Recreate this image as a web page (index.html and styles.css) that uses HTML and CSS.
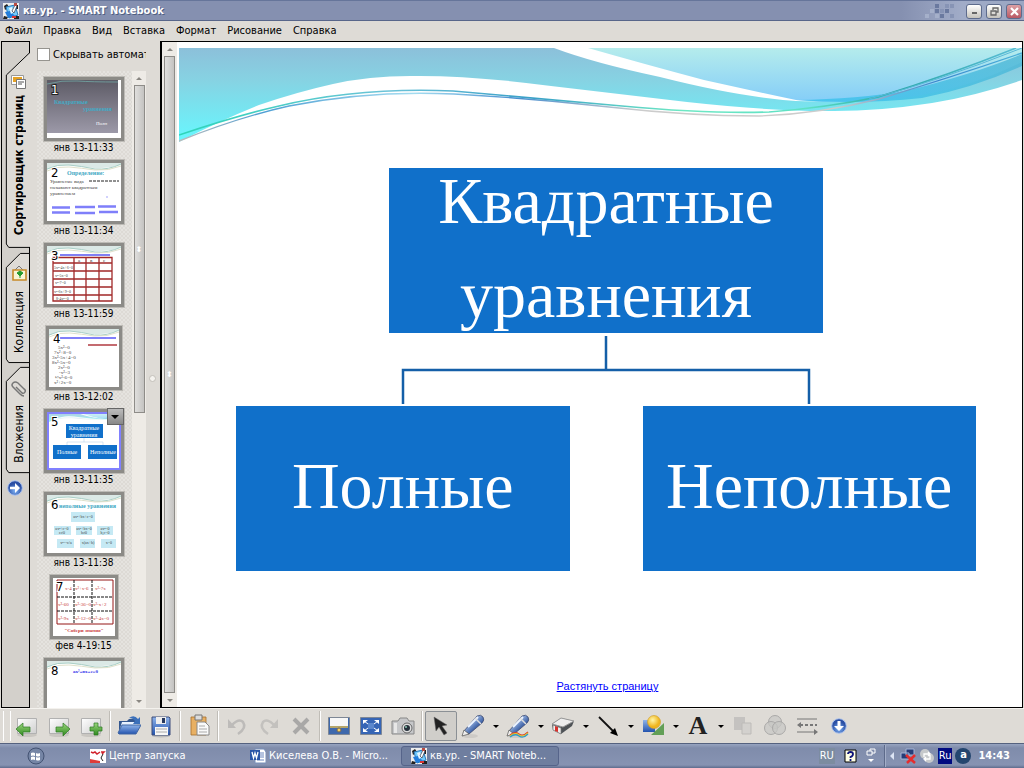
FILE: index.html
```html
<!DOCTYPE html>
<html lang="ru">
<head>
<meta charset="utf-8">
<title>кв.ур. - SMART Notebook</title>
<link rel="stylesheet" href="styles.css">
</head>
<body>
<svg class="defs" aria-hidden="true">
  <defs>
    <linearGradient id="sea" x1="0" y1="0" x2="0" y2="1"><stop offset="0" stop-color="#8cc0da"/><stop offset=".35" stop-color="#86d3e3"/><stop offset="1" stop-color="#66f8ff"/></linearGradient>
    <linearGradient id="sky" x1="0" y1="0" x2="0" y2="1"><stop offset="0" stop-color="#b5ecec"/><stop offset="1" stop-color="#84cdf8"/></linearGradient>
    <linearGradient id="edge" x1="0" y1="1" x2="1" y2="0"><stop offset="0" stop-color="#38c3ee"/><stop offset="1" stop-color="#4fb6d4"/></linearGradient>
    <linearGradient id="line" x1="0" x2="1"><stop offset="0" stop-color="#2ed5b8"/><stop offset=".25" stop-color="#6cc3d8"/><stop offset=".42" stop-color="#3aa0c8"/><stop offset=".6" stop-color="#6ee8c4"/><stop offset=".75" stop-color="#5ee0c4"/><stop offset=".85" stop-color="#2aa9a8"/><stop offset="1" stop-color="#58bcd4"/></linearGradient>
    <linearGradient id="line2" x1="0" x2="1"><stop offset="0" stop-color="#bbb"/><stop offset=".1" stop-color="#4f9fd4"/><stop offset=".28" stop-color="#a4dcf0"/><stop offset=".4" stop-color="#4a8fd0"/><stop offset=".55" stop-color="#ccc"/><stop offset=".78" stop-color="#ccc"/><stop offset=".9" stop-color="#3a86cc"/><stop offset="1" stop-color="#4ab2da"/></linearGradient>
    <linearGradient id="blue" x1="0" y1="0" x2="0" y2="1"><stop offset="0" stop-color="#8fb4ea"/><stop offset="1" stop-color="#2353ae"/></linearGradient>
    <linearGradient id="barrel" x1="0" y1="0" x2="1" y2="1"><stop offset=".3" stop-color="#a9c4ee"/><stop offset=".7" stop-color="#2a4f98"/></linearGradient>
    <linearGradient id="green" x1="0" y1="0" x2="0" y2="1"><stop offset="0" stop-color="#9bd67e"/><stop offset="1" stop-color="#2f8a1e"/></linearGradient>
    <linearGradient id="paper" x1="0" y1="0" x2="1" y2="1"><stop offset="0" stop-color="#fff"/><stop offset="1" stop-color="#cfcfcf"/></linearGradient>
    <linearGradient id="dusk" x1="0" y1="0" x2="0" y2="1"><stop offset="0" stop-color="#5d5b66"/><stop offset="1" stop-color="#9c99a8"/></linearGradient>
    <radialGradient id="sun" cx=".4" cy=".35"><stop offset="0" stop-color="#fff6a8"/><stop offset="1" stop-color="#efb51e"/></radialGradient>
    <radialGradient id="orb" cx=".5" cy=".7"><stop offset="0" stop-color="#7fb2f5"/><stop offset="1" stop-color="#2a4fa4"/></radialGradient>
    <symbol id="wave" viewBox="0 0 843 95" preserveAspectRatio="none">
      <path fill="url(#sea)" d="M0 0H375Q415 15 481 29Q560 49 617 53Q680 55 740 43Q795 29 843 7V32Q800 47 753 55Q695 64 645 63Q590 63 508 54L372 38Q290 27 231 28Q190 28 154 36Q118 44 80 57Q40 73 0 94Z"/>
      <path fill="url(#sky)" d="M409 0H843V14Q795 38 743 47Q680 58 617 52Q570 42 525 32Q465 16 409 0Z"/>
      <path fill="url(#edge)" opacity=".8" d="M617 52Q680 51 726 43Q795 26 843 6V18Q795 40 743 50Q680 57 617 52Z"/>
      <path fill="none" stroke="url(#line2)" stroke-width="1.400" d="M0 93Q60 69 110 58Q190 42 275 46Q350 50 430 59Q510 68 580 68Q640 66 700 51Q770 30 843 5"/>
      <path fill="none" stroke="url(#line)" stroke-width="1.600" d="M0 87Q60 67 100 58Q180 39 274 43Q350 50 443 58Q530 66 590 64Q645 60 699 49Q770 27 837 0"/>
      <path fill="none" stroke="#58b8d8" d="M690 51Q760 33 843 0"/>
    </symbol>
    <symbol id="crest" viewBox="0 0 74 9" preserveAspectRatio="none"><path d="M0 0H74V2Q60 6 47 5T20 2Q8 2 0 7Z" fill="#dbe9e6"/><path d="M0 6Q10 1 22 2T48 6Q62 7 74 1" fill="none" stroke="#a9cfc6"/><path d="M0 8Q10 3 22 4T48 7Q62 8 74 3" fill="none" stroke="#d5d8bd" stroke-width=".8"/></symbol>
    <symbol id="app" viewBox="0 0 16 16"><path fill="#eee" d="M0 0H16V16H0Z"/><path d="M1 3l3-2 2 3-4 3zM12 2h3v4h-2zM1 13l4 1-1 2H0zM11 13h5v3h-5z" fill="#222"/><path d="M3 4l9-2 3 10-9 3z" fill="#73cafa" stroke="#2878ba"/><path d="M2 9l5-1 5 5-7 2z" fill="#237ddb"/><path d="M6 5l3-1 2 5-3 2z" fill="#e4f5ff"/><path d="M9 8l3-6 2 1-3 7z" fill="#fff" stroke="#334" stroke-width=".7"/><path d="M9 13h4v2H9z" fill="#d33"/><path d="M11 0h3v3h-3z" fill="#b94b42"/></symbol>
    <symbol id="page" viewBox="0 0 24 24"><ellipse cx="12" cy="21" rx="10" ry="2" fill="#c9c6c1"/><path fill="url(#paper)" stroke="#b1b1b1" d="M2.500 4.500H21.500V19.500H2.500Z"/></symbol>
    <symbol id="pen" viewBox="0 0 24 24"><ellipse cx="9" cy="22" rx="8" ry="2" fill="#cdcac6"/><path d="M3 17L16 2q4-2 6 1t-1 6L8 20z" fill="url(#barrel)" stroke="#414d70" stroke-width=".8"/><path d="M7 13L17 3" stroke="#eef5ff" stroke-width="2"/><path d="M1 22l2-6 5 4z" fill="#eee" stroke="#555" stroke-width=".7"/><path d="M14 4l6 6" stroke="#ddd" stroke-width="1.500"/></symbol>
    <symbol id="down" viewBox="0 0 16 16"><circle cx="8" cy="8" r="7.300" fill="url(#orb)" stroke="#adc3ed"/><path d="M6.500 3h3v5H13l-5 5-5-5h3.500z" fill="#fff"/></symbol>
    <symbol id="right" viewBox="0 0 16 16"><circle cx="8" cy="8" r="7.300" fill="url(#orb)" stroke="#adc3ed"/><path d="M3 6.800h5V3l5 5-5 5V9.200H3z" fill="#fff"/></symbol>
  </defs>
</svg>

<header class="titlebar">
  <svg class="i16"><use href="#app"/></svg>
  <h1>кв.ур. - SMART Notebook</h1>
  <svg class="pixels" viewBox="0 0 30 16"><path fill="#6a799f" d="M10 1h4v4h-4zM10 6h4v4h-4zM20 6h4v4h-4zM15 11h4v4h-4z"/><path fill="#8794b5" d="M20 1h4v4h-4zM25 1h4v4h-4zM15 6h4v4h-4zM25 11h4v4h-4z"/><path fill="#a5b0ca" d="M0 11h4v4H0zM5 6h4v4H5zM10 11h4v4h-4z"/></svg>
  <button class="win" aria-label="Свернуть"><svg viewBox="0 0 13 13"><path d="M4 7h5v2H4z" fill="#666"/></svg></button>
  <button class="win" aria-label="Восстановить"><svg viewBox="0 0 13 13"><path d="M5 5V3h5v4H8M3 6h5v4H3z" fill="none" stroke="#666" stroke-width="1.300"/></svg></button>
  <button class="win close" aria-label="Закрыть"><svg viewBox="0 0 13 13"><path d="M3 3l7 7M10 3l-7 7" stroke="#fff" stroke-width="2.200"/></svg></button>
</header>
<nav class="menu"><button>Файл</button><button>Правка</button><button>Вид</button><button>Вставка</button><button>Формат</button><button>Рисование</button><button>Справка</button></nav>

<main class="work">
  <div class="tabs">
    <button class="tab sorter"><svg class="shape" viewBox="0 0 29 210"><path fill="#dedbd6" d="M29 8L4 32V207L7 209H29Z"/><path fill="none" stroke="#000" d="M28.500 0V8L4.500 31V206L7 209.500H29"/></svg>
      <svg class="i16" viewBox="0 0 16 16"><path d="M.5 1.500h12v9H.5z" fill="#fff" stroke="#999"/><path d="M2 3h9v5H2z" fill="#e5a225"/><path d="M5.500 5.500h9v9h-9z" fill="#fff" stroke="#777"/><path d="M7 8h6M7 10h4" stroke="#555"/></svg><span>Сортировщик страниц</span></button>
    <button class="tab gallery"><svg class="shape" viewBox="0 0 29 114"><path fill="#dedbd6" stroke="#000" d="M28.500 .5H19L4.500 15V110L7 113.500H28.500Z"/></svg>
      <svg class="i16" viewBox="0 0 16 16"><path d="M4 5l4-4 4 4" fill="none" stroke="#777"/><path d="M2 5h13v10H2z" fill="#f8f4d4" stroke="#c88b28" stroke-width="1.600"/><path d="M9 13V9M6 8l3-2 3 2-3 3z" fill="#269b2d" stroke="#269b2d"/></svg><span>Коллекция</span></button>
    <button class="tab attach"><svg class="shape" viewBox="0 0 29 110"><path fill="#dedbd6" stroke="#000" d="M28.500 .5H19L4.500 15V106L7 109.500H28.500Z"/></svg>
      <svg class="i16" viewBox="0 0 16 16"><path d="M5 6l6 6q2 1 3-1t-1-3L7 2Q4 0 2 2T2 6l7 7q2 2 4 2" fill="none" stroke="#777" stroke-width="1.500"/></svg><span>Вложения</span></button>
    <button class="go" aria-label="Переместить панель"><svg class="i16"><use href="#right"/></svg></button>
  </div>

  <aside class="panel">
    <label class="hide"><input type="checkbox"><span>Скрывать автоматически</span></label>
    <div class="sorterbody">
      <ol class="thumbs">
        <li><div class="frame"><svg viewBox="0 0 74 58"><path fill="url(#dusk)" d="M0 0H71V53H0z"/><path d="M0 4Q15 0 30 1T71 2" fill="none" stroke="#6f9a9a"/><text x="7" y="24" class="t teal b">Квадратные</text><text x="36" y="31" class="t teal b">уравнения</text><text x="49" y="45" class="t s w">Полн</text><text x="4" y="14" class="num inv">1</text></svg></div>янв 13-11:33</li>
        <li><div class="frame"><svg viewBox="0 0 74 58"><use href="#crest" width="74" height="9"/><text x="20" y="12" class="t teal b">Определение:</text><text x="3" y="20" class="t s">Уравнение вида</text><text x="3" y="26" class="t s">называют квадратным</text><text x="3" y="32" class="t s">уравнением</text><path d="M42 18h30" stroke="#222" stroke-dasharray="3 1"/><path d="M5 44.500h18M28 44h20M51 43.500h18M5 49.500h18M28 50h20M52 49h19" stroke="#7f7ffa" stroke-width="2.500"/><circle cx="60" cy="34" r=".7" fill="#7f7ffa"/><text x="4" y="14" class="num">2</text></svg></div>янв 13-11:34</li>
        <li><div class="frame"><svg viewBox="0 0 74 58"><use href="#crest" width="74" height="9"/><path d="M13 9h50" stroke="#8080f4" stroke-width="2"/><path d="M6 11.500H65V55H6zM27 12v43M39 12v43M52 12v43M6 17h59M6 25h59M6 33h59M6 41h59M6 49h59" fill="none" stroke="#a12929" stroke-width="1.300"/><text x="31" y="16" class="t s">a</text><text x="43" y="16" class="t s">в</text><text x="56" y="16" class="t s">c</text><text x="7" y="23" class="t xs">5x²-4x+6=0</text><text x="8" y="31" class="t xs">x²-5x=0</text><text x="8" y="38" class="t xs">x²-7=0</text><text x="7" y="47" class="t xs">x²-6x+9=0</text><text x="9" y="54" class="t xs">8-4x²=0</text><text x="4" y="14" class="num">3</text></svg></div>янв 13-11:59</li>
        <li><div class="frame mid"><svg viewBox="0 0 70 58"><use href="#crest" width="70" height="9"/><path d="M11 9h56" stroke="#8080fa" stroke-width="2"/><path d="M39 16h29" stroke="#c46b70" stroke-width="2"/><text x="9" y="20" class="t s">5x²=0</text><text x="5" y="25" class="t s">7x²+8=0</text><text x="3" y="30" class="t s">3x²-5x+4=0</text><text x="3" y="35" class="t s">8x²-5x=0</text><text x="9" y="40" class="t s">2x²=0</text><text x="10" y="45" class="t s">-x²=3</text><text x="6" y="50" class="t s">½x²-6=0</text><text x="5" y="55" class="t s">x²+2x=0</text><text x="4" y="14" class="num">4</text></svg></div>янв 13-12:02</li>
        <li><div class="frame"><svg viewBox="0 0 74 58"><use href="#wave" x="2" y="2" width="70" height="8" opacity=".7"/><path d="M1 1H73V57H1z" fill="none" stroke="#8080ff" stroke-width="2"/><path d="M19 12h37v14H19zM6 33h28v14H6zM41 33h29v14H41z" fill="#1070ca"/><path d="M37 26v4M20 33v-3h36v3" fill="none" stroke="#b8d1e8" stroke-width=".6"/><text x="37" y="18" class="t w c">Квадратные</text><text x="37" y="25" class="t w c">уравнения</text><text x="20" y="42" class="t w c">Полные</text><text x="56" y="42" class="t w c">Неполные</text><text x="4" y="14" class="num">5</text></svg><button class="drop" aria-label="Меню страницы"><svg viewBox="0 0 10 6"><path d="M1 1h8l-4 4z"/></svg></button></div>янв 13-11:35</li>
        <li><div class="frame"><svg viewBox="0 0 74 58"><use href="#crest" width="74" height="9"/><path d="M24 17h24v10H24zM7 31h17v9H7zM29 31h16v9H29zM50 31h16v9H50zM10 44h17v9H10zM33 44h15v9H33zM54 44h15v9H54z" fill="#c5e9f4"/><text x="12" y="13" class="t teal b">неполные уравнения</text><text x="36" y="23" class="t xs c">ax²+bx+c=0</text><text x="15" y="35" class="t xs c">ax²+c=0</text><text x="15" y="39" class="t xs c">c≠0</text><text x="37" y="35" class="t xs c">ax²+bx=0</text><text x="37" y="39" class="t xs c">b≠0</text><text x="58" y="35" class="t xs c">ax²=0</text><text x="58" y="39" class="t xs c">b,c=0</text><text x="19" y="49" class="t xs c">x²=-c/a</text><text x="41" y="49" class="t xs c">x(ax+b)</text><text x="62" y="49" class="t xs c">x=0</text><text x="4" y="14" class="num">6</text></svg></div>янв 13-11:38</li>
        <li><div class="frame small"><svg viewBox="0 0 62 58"><path d="M4 2H60V46H4z" fill="#fff" stroke="#951616"/><path d="M21 2v44M39 2v44M4 19h56M4 33h56" stroke="#111" stroke-dasharray="3 1"/><text x="12" y="12" class="t red">x-4</text><text x="22" y="12" class="t red">x²+x-6</text><text x="42" y="12" class="t red">x²-7x</text><text x="5" y="28" class="t red">x²-60</text><text x="22" y="28" class="t red">x²-36=0</text><text x="40" y="28" class="t red">x²-x+2</text><text x="5" y="42" class="t red">x²-9x</text><text x="22" y="42" class="t red">x²-12=0</text><text x="40" y="42" class="t red">x²-4x=0</text><text x="31" y="54" class="t red c b">"Собери знания"</text><text x="3" y="13" class="num">7</text></svg></div>фев 4-19:15</li>
        <li><div class="frame"><svg viewBox="0 0 74 58"><use href="#crest" width="74" height="9"/><text x="26" y="12" class="t navy b">ax²+вx+c=0</text><text x="4" y="14" class="num">8</text></svg></div></li>
      </ol>
      <div class="scroll side"><i class="up"></i><i class="thumb"><b>⬍</b></i><i class="dn"></i></div>
    </div>
    <i class="grab"></i>
  </aside>

  <div class="scroll page"><i class="up"></i><i class="thumb"><b>⬍</b></i><i class="dn"></i></div>

  <section class="canvas">
    <svg class="wave"><use href="#wave" width="100%" height="100%"/></svg>
    <div class="chart">
      <div class="node root">Квадратные<br>уравнения</div>
      <svg class="links" viewBox="0 0 740 73" preserveAspectRatio="none"><path d="M370 3V37M167 71V37H573V71" fill="none" stroke="#145fa8" stroke-width="2.500"/></svg>
      <div class="node">Полные</div>
      <div class="node">Неполные</div>
    </div>
    <a class="stretch" href="#">Растянуть страницу</a>
  </section>
</main>

<div class="tools">
  <i class="grip"></i>
  <button aria-label="Назад"><svg><use href="#page"/><path d="M1 15l7-6v4h7v5H8v4z" fill="url(#green)" stroke="#2d7a22" stroke-width=".7"/></svg></button>
  <button aria-label="Вперёд"><svg><use href="#page"/><path d="M23 15l-7-6v4H9v5h7v4z" fill="url(#green)" stroke="#2d7a22" stroke-width=".7"/></svg></button>
  <button aria-label="Добавить страницу"><svg><use href="#page"/><path d="M15 9h4v4h4v4h-4v4h-4v-4h-4v-4h4z" fill="url(#green)" stroke="#2d7a22" stroke-width=".7"/></svg></button>
  <i class="sep"></i>
  <button aria-label="Открыть"><svg><path d="M2 7h8l2-2h7v14H2z" fill="#34578f"/><path d="M5 8h16l-3 10H2z" fill="#e8f2ff"/><path d="M1 19l4-8h19l-5 9H2z" fill="url(#blue)" stroke="#4167a4"/><path d="M12 4q5-4 9 1l2-2v7h-7l2-3q-2-3-6-3z" fill="#3b70ba"/></svg></button>
  <button aria-label="Сохранить"><svg><ellipse cx="12" cy="22" rx="9" ry="1.500" fill="#bbb"/><path d="M3 3h17l1 1v17H3z" fill="url(#blue)" stroke="#3c4d7b"/><path d="M7 3h10v7H7z" fill="#eee"/><path d="M13 4h3v5h-3z" fill="#26375d"/><path d="M6 13h13v8H6z" fill="#f7f7f7"/><path d="M7 15h11M7 18h11" stroke="#aaa"/></svg></button>
  <i class="sep"></i>
  <button aria-label="Вставить"><svg><path d="M4 3h15v18H4z" fill="#e8b063" stroke="#a5702d" stroke-width=".8"/><path d="M8 1h7v5H8z" fill="#ddd" stroke="#777"/><path d="M10 8h8l4 4v9H10z" fill="#fafafa" stroke="#888"/><path d="M12 12h6M12 15h8M12 18h8" stroke="#aaa"/></svg></button>
  <i class="sep"></i>
  <button disabled aria-label="Отменить"><svg><path d="M13 20q9-6 5-12-4-4-11 3" fill="none" stroke="#bdbbb9" stroke-width="2.500"/><path d="M3 5v9h8z" fill="#bdbbb9"/></svg></button>
  <button disabled aria-label="Повторить"><svg><path d="M11 20Q2 14 6 8q4-4 11 3" fill="none" stroke="#c3c1be" stroke-width="2.500"/><path d="M21 5v9h-8z" fill="#c3c1be"/></svg></button>
  <button disabled aria-label="Удалить"><svg><path d="M5 5l14 14M19 5L5 19" stroke="#a9a8a7" stroke-width="4"/></svg></button>
  <i class="sep"></i>
  <button aria-label="Затенение"><svg><path d="M1.500 3.500h21v17h-21z" fill="#3e68ac" stroke="#7e8795"/><path d="M3 4h18v8H3z" fill="#f7f7f7"/><path d="M3 13h18" stroke="#ddba55" stroke-width="1.500"/><circle cx="12" cy="16" r="2" fill="#f5d25e" stroke="#765"/></svg></button>
  <button aria-label="Полный экран"><svg><path d="M1.500 3.500h21v17h-21z" fill="#3665b5" stroke="#7e8795"/><path d="M9 9h6v6H9z" fill="#5b87cc"/><path d="M4 6h5L4 10zM20 6h-5l5 4zM4 18h5l-5-4zM20 18h-5l5-4z" fill="#fff"/><path d="M5 7l4 3M19 7l-4 3M5 17l4-3M19 17l-4-3" stroke="#fff"/></svg></button>
  <button aria-label="Захват экрана"><svg><path d="M1 7h6l2-3h7l2 3h5v13H1z" fill="#c6c7c9" stroke="#888"/><path d="M3 9h3v10H3z" fill="#e7e7e7"/><circle cx="16" cy="14" r="5" fill="#ddd" stroke="#666"/><circle cx="16" cy="14" r="3" fill="#26303b"/><circle cx="15" cy="13" r="1" fill="#8bc6b3"/></svg></button>
  <i class="sep"></i>
  <button class="on" aria-label="Выбрать"><svg><path d="M5 3l2 14 3-4 5 8 3-2-5-7 5-1z" fill="#222" stroke="#666" stroke-width=".5"/></svg></button>
  <button aria-label="Перо"><svg><use href="#pen"/></svg></button><button class="dd" aria-label="Типы пера"></button>
  <button aria-label="Творческое перо"><svg><use href="#pen"/><path d="M4 21q5-4 9-1t9-2" fill="none" stroke="#d5412f" stroke-width="1.300"/><path d="M4 22q5-4 9-1t9-2" fill="none" stroke="#e8c828" stroke-width="1.300"/><path d="M4 23q5-4 9-1t9-2" fill="none" stroke="#2f9bc8" stroke-width="1.300"/></svg></button><button class="dd" aria-label="Типы творческого пера"></button>
  <button aria-label="Ластик"><svg><path d="M1 10L10 4l13 3-2 5-11 8-8-4z" fill="#4f5357"/><path d="M1 10l9-6 13 3-11 6z" fill="#eee" stroke="#999"/><path d="M2 11l8 3v6l-8-4z" fill="#eee" stroke="#777" stroke-width=".7"/><path d="M4 12l3 1v5l-3-1z" fill="#d8322c"/></svg></button><button class="dd" aria-label="Типы ластика"></button>
  <button aria-label="Линия"><svg><path d="M3 3l16 16" stroke="#111" stroke-width="1.800"/><path d="M22 22l-8-3 5-5z"/></svg></button><button class="dd" aria-label="Типы линии"></button>
  <button aria-label="Фигура"><svg><path d="M2 6h12v12H2z" fill="url(#blue)"/><path d="M23 9v12H10z" fill="#629f57"/><circle cx="13" cy="8" r="6.500" fill="url(#sun)" stroke="#ce9b24" stroke-width=".6"/></svg></button><button class="dd" aria-label="Типы фигур"></button>
  <button class="letter">A</button><button class="dd" aria-label="Шрифты"></button>
  <button disabled aria-label="Заливка"><svg><path d="M3 3h11v13H3z" fill="#c4c2c0"/><path d="M11 9h9v11h-9z" fill="#d3d1ce" stroke="#bdbbb8"/></svg></button>
  <button disabled aria-label="Прозрачность"><svg><g fill="#c8c7c5" fill-opacity=".7" stroke="#aaa9a8"><circle cx="12" cy="8" r="6.500"/><circle cx="8" cy="14" r="6.500"/><circle cx="16" cy="14" r="6.500"/></g></svg></button>
  <button aria-label="Свойства линии"><svg><path d="M2 5h20M2 18h18" stroke="#777"/><path d="M5 11h17" stroke="#777" stroke-width="2" stroke-dasharray="3 2"/><path d="M2 11l4-3v6zM23 18l-4-3v6z" fill="#777"/></svg></button>
  <button aria-label="Ещё"><svg class="i16"><use href="#down"/></svg></button>
</div>

<footer class="taskbar">
  <button class="start" aria-label="Пуск"><svg viewBox="0 0 18 18"><circle cx="9" cy="9" r="8" fill="#7585a5" stroke="#435272"/><path d="M4 6q2-1 4 0v3q-2-1-4 0zM9 6q2 1 4 0v3q-2 1-4 0zM4 10q2-1 4 0v3q-2-1-4 0zM9 10q2 1 4 0v3q-2 1-4 0z" fill="#fff"/></svg></button>
  <button class="task"><svg class="i16" viewBox="0 0 16 16"><path fill="#fff" d="M0 1h16v14H0z"/><path d="M1 4l2 1 2-1 2 2 3-2M11 4h3l-2 2" stroke="#d2222c" stroke-width="1.500" fill="none"/><path d="M13 6l-2 4 2 3" stroke="#222" fill="none"/><path d="M0 11l10 2v2H0z" fill="#df3b38"/></svg>Центр запуска</button>
  <button class="task"><svg class="i16" viewBox="0 0 16 16"><path d="M5 1h9l2 3v11H5z" fill="#fff" stroke="#7990bb"/><path d="M9 5h5M9 7h5M9 9h5M7 12h7" stroke="#6b86be"/><path d="M0 2h10v10H0z" fill="#2b56a7"/><path d="M2 4l1.500 6L5 5l1.500 5L8 4" fill="none" stroke="#fff" stroke-width="1.300"/></svg>Киселева О.В. - Micro...</button>
  <button class="task active"><svg class="i16"><use href="#app"/></svg>кв.ур. - SMART Noteb...</button>
  <div class="tray">
    <button class="lang">RU</button>
    <svg class="help" viewBox="0 0 13 14"><path d="M1 1h11v12H1z" fill="#ffffe5" stroke="#000"/><path d="M4 5q0-2 2.500-2T9 5 6.500 8v1M6.500 10v2" fill="none" stroke="#0b1278" stroke-width="1.800"/></svg>
    <svg class="restore" viewBox="0 0 10 16"><path d="M4 3V1h5v4H6M1 3h5v4H1z" fill="none" stroke="#fff"/><path d="M2 11h6l-3 3z" fill="#fff"/></svg>
    <i class="traysep"></i>
    <svg class="chev" viewBox="0 0 5 8"><path d="M5 0v8L1 4z" fill="#dce4f4"/></svg>
    <svg class="i16" viewBox="0 0 16 16"><path d="M6 1h8v6H6zM1 5h8v6H1z" fill="#263d78" stroke="#a4b5d6"/><path d="M6 7l9 8M15 7l-8 8" stroke="#e52d2d" stroke-width="2.500"/></svg>
    <svg class="i16" viewBox="0 0 16 16"><circle cx="6" cy="6" r="5" fill="#c6c9cb"/><circle cx="10" cy="10" r="5" fill="#c6c9cb"/><path d="M5 9V6h5M11 7v4H6M9 4l2 2-2 2M7 9l-2 2 2 2" fill="none" stroke="#fff" stroke-width="1.300"/></svg>
    <span class="ru">Ru</span>
    <span class="avast">a</span>
    <time>14:43</time>
  </div>
</footer>
</body>
</html>
```
FILE: styles.css
```css
* { box-sizing: border-box; }
body {
  margin: 0;
  height: 100vh;
  display: flex;
  flex-direction: column;
  overflow: hidden;
  background: #dedbd6;
  color: #000;
  font: 11px/14px "DejaVu Sans Condensed", "DejaVu Sans", sans-serif;
}
button { font: inherit; color: inherit; background: none; border: 0; padding: 0; }
svg { display: block; flex: none; }
i { font-style: normal; }
.defs { position: absolute; width: 0; height: 0; }
.i16 { width: 16px; height: 16px; }

.titlebar {
  flex: none;
  height: 21px;
  display: flex;
  align-items: center;
  gap: 4px;
  padding: 1px 2px 0 3px;
  border-top: 1px solid #66759a;
  border-bottom: 1px solid #58668a;
  background: linear-gradient(90deg, #8590b0 0, #8590b0 88%, #a1acc8 94%, #9aa6c3 100%);
}
.titlebar h1 {
  flex: 1;
  margin: 0;
  color: #fff;
  font-size: 11px;
  line-height: 16px;
  text-shadow: 1px 1px 0 #4f5e82;
}
.pixels { width: 30px; height: 16px; margin-right: 7px; }
.win {
  width: 16px;
  height: 15px;
  display: grid;
  place-items: center;
  border: 1px solid #5d6b8c;
  border-radius: 3px;
  background: linear-gradient(#fff, #c5c2bb);
}
.win svg { width: 13px; height: 13px; }
.win.close { background: linear-gradient(#dca0a4, #b95864); }

.menu { flex: none; height: 20px; display: flex; align-items: center; gap: 11px; padding-left: 5px; }

.work { flex: 1; min-height: 0; display: flex; padding: 0 1px 0 1px; border-bottom: 1px solid #f4f2ee; }

.tabs { flex: none; width: 29px; border: solid #000; border-width: 1px 0 1px 1px; background: linear-gradient(90deg, #d3d0cb 27px, #000 27px); }
.tab { position: relative; width: 28px; display: flex; flex-direction: column; align-items: center; gap: 5px; padding-left: 5px; }
.tab > * { position: relative; }
.tab .shape { position: absolute; left: 0; top: 0; width: 28px; height: 100%; }
.tab span { writing-mode: vertical-rl; transform: rotate(180deg); font-size: 12px; line-height: 16px; white-space: nowrap; }
.sorter { height: 209px; padding-top: 32px; }
.sorter span { font-weight: bold; }
.gallery { height: 114px; padding-top: 14px; gap: 10px; }
.attach { height: 110px; padding-top: 16px; gap: 8px; }
.go { display: block; margin: 5px 0 0 5px; }

.panel { position: relative; flex: none; width: 130px; display: flex; flex-direction: column; padding: 6px 14px 0 7px; }
.hide { flex: none; height: 24px; display: flex; gap: 3px; line-height: 16px; overflow: hidden; }
.hide span { overflow: hidden; white-space: nowrap; }
.hide input { flex: none; appearance: none; width: 13px; height: 13px; margin: 1px 0 0; border: 1px solid #96948f; background: #fff; }
.sorterbody { flex: 1; min-height: 0; display: flex; }
.thumbs {
  flex: 1;
  margin: 0;
  padding: 6px 0 0;
  overflow: hidden;
  list-style: none;
  background: repeating-conic-gradient(#e5e3df 0 25%, #dddad5 0 50%) 0 0 / 4px 4px;
}
.thumbs li { height: 83px; display: flex; flex-direction: column; align-items: center; gap: 1px; padding-right: 2px; font-size: 10px; line-height: 12px; }
.frame { flex: none; position: relative; width: 80px; height: 64px; border: 3px solid #8c8b87; outline: 1px solid #bdbbb6; background: #fff; }
.frame.mid { width: 76px; }
.frame.small { width: 68px; }
.frame > svg { width: 100%; height: 100%; }
.num { font: 13px "DejaVu Sans Condensed", sans-serif; paint-order: stroke; stroke: #fff; stroke-width: 2px; }
.inv { fill: #fff; stroke: #222; }
.t { font: 6px "Liberation Serif", serif; fill: #444; }
.s { font-size: 5px; }
.xs { font-size: 4px; }
.b { font-weight: bold; }
.c { text-anchor: middle; }
.w { fill: #fff; }
.teal { fill: #45a9c4; }
.red { font-size: 5px; fill: #c93a3a; }
.navy { fill: #3333ea; font-size: 5px; }
.drop { position: absolute; right: -3px; top: -4px; width: 17px; height: 17px; display: grid; place-items: center; border: 1px solid #666; background: linear-gradient(#bbb, #888); }
.drop svg { width: 10px; height: 6px; }
.grab { position: absolute; right: 4px; top: 50%; width: 7px; height: 7px; border: 1px solid #c3c0ba; border-radius: 50%; background: #f5f3ef; }

.scroll { flex: none; width: 14px; display: flex; flex-direction: column; align-items: center; background: #eeebe6; }
.scroll .up, .scroll .dn { flex: none; width: 100%; height: 14px; display: grid; place-items: center; }
.up::before, .dn::before { content: ""; border: 3px solid transparent; }
.up::before { border-bottom-color: #8a8782; margin-bottom: 3px; }
.dn::before { border-top-color: #8a8782; margin-top: 3px; }
.scroll .thumb { width: 11px; flex: 1; display: grid; place-items: center; border: 1px solid #8e8c88; background: linear-gradient(90deg, #e0dfdd, #c4c3c1); }
.scroll b { color: #fff; font: 8px "DejaVu Sans", sans-serif; }
.side .thumb { flex: 0 1 328px; }
.side .dn { margin-top: auto; }
.page { width: 17px; border: solid #000; border-width: 1px 0 1px 2px; }

.canvas { flex: 1; min-width: 0; display: flex; flex-direction: column; padding: 6px 0 0 2px; border: solid #000; border-width: 1px 1px 1px 0; background: #fff; }
.wave { width: 100%; height: 95px; }
.chart { display: grid; grid-template-columns: 1fr 1fr; column-gap: 73px; padding: 25px 46px 0 57px; }
.node {
  height: 165px;
  display: grid;
  place-content: center;
  padding-bottom: 6px;
  text-align: center;
  background: #1070ca;
  color: #fff;
  font: 66px/94px "Liberation Serif", serif;
}
.root { grid-column: 1 / 3; justify-self: center; width: 434px; }
.links { grid-column: 1 / 3; width: 100%; height: 73px; }
.stretch { margin: auto auto 14px; padding-left: 14px; color: #00f; font: 11px/14px "Liberation Sans", sans-serif; }

.tools { flex: none; height: 34px; display: flex; align-items: center; padding-left: 3px; }
.tools button { flex: none; width: 32px; height: 30px; display: grid; place-items: center; }
.tools svg { width: 24px; height: 24px; }
.tools svg.i16 { width: 16px; height: 16px; }
.grip { width: 8px; height: 30px; border: solid #fff; border-width: 0 1px; }
.sep { width: 2px; height: 30px; margin: 0 2px; border-left: 1px solid #c0bdb7; border-right: 1px solid #fff; }
.tools .on { border: 1px solid #8b9095; border-radius: 2px; background: #d0ceca; }
.tools .dd { width: 13px; }
.dd::before { content: ""; margin-top: 3px; border: 3px solid transparent; border-top-color: #000; }
.tools .letter { color: #222; font: bold 26px/26px "Liberation Serif", serif; }

.taskbar {
  flex: none;
  height: 25px;
  display: flex;
  align-items: center;
  padding: 0 14px 0 27px;
  border-top: 1px solid #55627f;
  background: linear-gradient(#97a4c0, #7f8cab 4px, #8793b2 21px, #5e6c8d);
  color: #fff;
}
.start svg { width: 18px; height: 18px; }
.task { height: 20px; display: flex; align-items: center; gap: 3px; width: 160px; padding-left: 9px; white-space: nowrap; }
.start + .task { margin-left: 36px; }
.task.active { width: 158px; border: 1px solid #56648a; border-radius: 3px; background: #6f7e9f; }
.tray { margin-left: auto; display: flex; align-items: center; gap: 3px; }
.lang { height: 16px; padding: 0 1px; background: #7c8ca0; }
.help { width: 13px; height: 14px; margin: 0 6px; }
.restore { width: 10px; height: 16px; }
.traysep { width: 2px; height: 22px; margin: 0 0 0 5px; border-left: 1px solid #5d6a8a; border-right: 1px solid #a3aec8; }
.chev { width: 5px; height: 8px; margin-right: 3px; }
.ru { padding: 1px; background: #000a80; }
.avast { width: 16px; height: 16px; border-radius: 50%; background: #24466f; text-align: center; font-weight: bold; }
.tray time { margin-left: 4px; font-weight: bold; }
```
